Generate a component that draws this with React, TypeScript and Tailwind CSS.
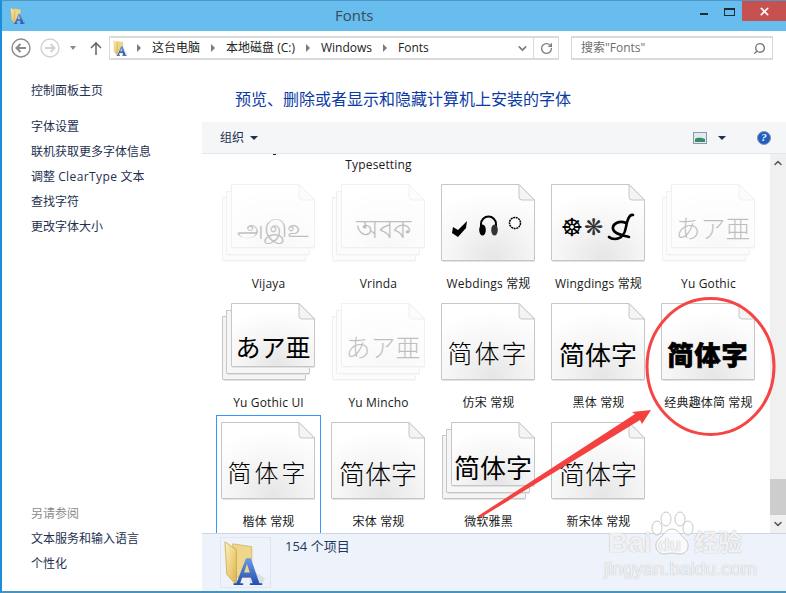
import { useId } from 'react';
import { ChevronDown, ChevronUp, Search, RotateCw, X } from 'lucide-react';

const UI_FONT = "font-['Open_Sans','Noto_Sans_CJK_SC',sans-serif]";

type Font = { label: string; stacked?: boolean; faded?: boolean; selected?: boolean; glyph: React.ReactNode };

function Han({ className }: { className: string }) {
  return <span className={`whitespace-nowrap font-['Noto_Sans_CJK_SC',sans-serif] text-black ${className}`}>简体字</span>;
}

function Kana({ className = '' }: { className?: string }) {
  return <span className={`whitespace-nowrap font-['Noto_Sans_CJK_JP',sans-serif] text-[25px] text-black ${className}`}>あア亜</span>;
}

function WebdingsGlyphs() {
  return (
    <svg width="80" height="30" viewBox="0 0 80 30" className="mt-[-12px]">
      <path d="M5 14l5 3 9-9-1 7-8 9-6-4z" fill="#000" />
      <path d="M33 14v-3a7.5 7.5 0 0 1 15 0v3" fill="none" stroke="#000" strokeWidth="2" />
      <ellipse cx="34.5" cy="17" rx="3.3" ry="5.5" fill="#000" />
      <ellipse cx="46.5" cy="17" rx="3.3" ry="5.5" fill="#333" />
      <circle cx="67" cy="10" r="5.5" fill="#fff" stroke="#000" strokeWidth="1.5" strokeDasharray="2 .6" />
    </svg>
  );
}

function WingdingsGlyphs() {
  return (
    <div className="mt-[-14px] flex items-center">
      <span className="font-['DejaVu_Sans',sans-serif] text-[25px] leading-none text-black">☸</span>
      <span className="ml-[1px] font-['DejaVu_Sans',sans-serif] text-[23px] leading-none text-[#333]">❋</span>
      <svg width="28" height="28" viewBox="0 0 28 28" className="ml-[4px]">
        <path
          d="M26 2C22 1 20 8 19 14C18 21 14 26 8 26C4 26 2 24 2 24M19 10C12 7 5 11 6 16C7 21 15 22 22 24"
          fill="none"
          stroke="#000"
          strokeWidth="2.6"
          strokeLinecap="round"
        />
      </svg>
    </div>
  );
}

const rows: Font[][] = [
  [
    { label: 'Vijaya', stacked: true, faded: true, glyph: <span className="font-['Noto_Sans','DejaVu_Sans',sans-serif] text-[24px] text-black">அஇஉ</span> },
    { label: 'Vrinda', stacked: true, faded: true, glyph: <span className="font-['Noto_Sans','DejaVu_Sans',sans-serif] text-[26px] text-black">অবক</span> },
    { label: 'Webdings 常规', glyph: <WebdingsGlyphs /> },
    { label: 'Wingdings 常规', glyph: <WingdingsGlyphs /> },
    { label: 'Yu Gothic', stacked: true, faded: true, glyph: <Kana className="font-light" /> },
  ],
  [
    { label: 'Yu Gothic UI', stacked: true, glyph: <Kana /> },
    { label: 'Yu Mincho', stacked: true, faded: true, glyph: <Kana className="font-light" /> },
    { label: '仿宋 常规', glyph: <Han className="text-[25px] font-light tracking-[2px]" /> },
    { label: '黑体 常规', glyph: <Han className="text-[26px] font-normal" /> },
    { label: '经典趣体简 常规', glyph: <Han className="text-[26px] font-black tracking-[1px] [-webkit-text-stroke:0.7px_black]" /> },
  ],
  [
    { label: '楷体 常规', selected: true, glyph: <Han className="text-[24px] font-light tracking-[3px]" /> },
    { label: '宋体 常规', glyph: <Han className="text-[26px] font-light" /> },
    { label: '微软雅黑', stacked: true, glyph: <Han className="text-[26px] font-normal" /> },
    { label: '新宋体 常规', glyph: <Han className="text-[26px] font-light" /> },
  ],
];

function Page({ x, y, w, h, fill }: { x: number; y: number; w: number; h: number; fill: string }) {
  const f = 16;
  return (
    <g transform={`translate(${x} ${y})`}>
      <path
        d={`M.5 .5H${w - f}L${w - 0.5} ${f}V${h - 1}Q${w - 0.5} ${h - 0.5} ${w - 1} ${h - 0.5}H1Q.5 ${h - 0.5} .5 ${h - 1}Z`}
        fill={fill}
        stroke="#c6c6c6"
      />
      <path d={`M${w - f} .5V${f - 3}Q${w - f} ${f} ${w - f + 3} ${f}H${w - 0.5}Z`} fill="#f4f4f4" stroke="#c6c6c6" />
      <path d={`M1.5 ${h + 0.5}H${w - 0.5}`} stroke="#e2e2e2" />
    </g>
  );
}

function FontTile({ font }: { font: Font }) {
  const id = useId();
  const fill = `url(#${id})`;
  return (
    <div className={`relative h-[78px] w-[94px] ${font.faded ? 'opacity-25' : ''}`}>
      <svg width="94" height="80" className="absolute left-0 top-[-1px]">
        <defs>
          <radialGradient id={id} cx="0.55" cy="0.95" r="0.85">
            <stop offset="0" stopColor="#e6e6e6" />
            <stop offset="0.55" stopColor="#f6f6f6" />
            <stop offset="1" stopColor="#ffffff" />
          </radialGradient>
        </defs>
        {font.stacked ? (
          <>
            <Page x={1} y={14} w={84} h={64} fill="#f4f4f4" />
            <Page x={5} y={8} w={84} h={64} fill="#f6f6f6" />
            <Page x={10} y={1} w={84} h={64} fill={fill} />
          </>
        ) : (
          <Page x={0} y={1} w={94} h={77} fill={fill} />
        )}
      </svg>
      <div
        className={`absolute flex items-center justify-center ${
          font.stacked ? 'left-[10px] right-0 top-[22px] h-[44px]' : 'left-0 right-0 top-[28px] h-[44px]'
        }`}
      >
        {font.glyph}
      </div>
    </div>
  );
}

function FontCell({ font }: { font: Font }) {
  return (
    <div className={`box-border h-[119px] w-[105px] border ${font.selected ? 'border-[#3399ff]' : 'border-transparent'}`}>
      <div className="ml-[4px] mt-[6px]">
        <FontTile font={font} />
      </div>
      <div className="mt-[14px] whitespace-nowrap text-center text-[12px] leading-[16px] tracking-[0.15px] text-[#1a1a1a]">{font.label}</div>
    </div>
  );
}

function FolderIcon({ size }: { size: number }) {
  return (
    <svg width={size} height={size} viewBox="0 0 48 48">
      <defs>
        <linearGradient id="flap" x1="0" x2="1" y1="0" y2="1">
          <stop offset="0" stopColor="#fff3b8" />
          <stop offset="1" stopColor="#dcb24e" />
        </linearGradient>
        <linearGradient id="letter" x1="0" x2="0" y1="0" y2="1">
          <stop offset="0" stopColor="#6d9ae6" />
          <stop offset="1" stopColor="#1f4fb0" />
        </linearGradient>
      </defs>
      <path d="M28 30l16 10-4 7H28z" fill="#000" fillOpacity=".08" />
      <path d="M10 4l20 3v32H14z" fill="#efd68a" stroke="#d3b15c" strokeWidth=".8" />
      <path d="M2 2l12 8v37L4 36z" fill="url(#flap)" stroke="#c9a24a" strokeWidth=".8" />
      <path
        d="M11 47v-2h3L24 19h5l9 26h3v2H28v-2h3l-2-6H20l-2 6h3v2zM22 34h6l-3-9z"
        fill="url(#letter)"
        fillRule="evenodd"
      />
    </svg>
  );
}

function NavCircle({ faded }: { faded?: boolean }) {
  const c = faded ? '#d2d2d2' : '#8a8a8a';
  return (
    <svg width="20" height="20" viewBox="0 0 20 20">
      <circle cx="10" cy="10" r="9" fill="none" stroke={c} strokeWidth="1.4" />
      {faded ? (
        <path d="M5 10h9M10.5 6l4 4-4 4" fill="none" stroke={c} strokeWidth="2" />
      ) : (
        <path d="M15 10H6M9.5 6l-4 4 4 4" fill="none" stroke={c} strokeWidth="2" />
      )}
    </svg>
  );
}

function Crumb({ text }: { text: string }) {
  return (
    <>
      <span className="mx-[11px] h-0 w-0 border-y-[4px] border-l-[4px] border-y-transparent border-l-[#7a7a7a]" />
      <span className="whitespace-nowrap">{text}</span>
    </>
  );
}

function SideLink({ children, muted }: { children: React.ReactNode; muted?: boolean }) {
  return <div className={`h-[25px] whitespace-nowrap text-[12px] leading-[25px] ${muted ? 'text-[#8a8a8a]' : 'text-[#1e2f50]'}`}>{children}</div>;
}

export default function App() {
  return (
    <div className={`relative flex h-[593px] w-[786px] flex-col overflow-hidden border-b-2 border-l-2 border-t border-b-[#4a93bd] border-l-[#1a8fd8] border-t-[#4d97c6] bg-white ${UI_FONT}`}>
      {/* title bar */}
      <div className="relative flex h-[30px] shrink-0 items-start bg-[#67bdee]">
        <div className="ml-[8px] mt-[6px]">
          <FolderIcon size={17} />
        </div>
        <div className="absolute left-[333px] top-[3px] text-[15px] leading-[22px] text-[#3c4a55]">Fonts</div>
        <div className="ml-auto flex items-start">
          <div className="mr-[16px] mt-[12px] h-[2px] w-[8px] bg-[#1c2b38]" />
          <div className="mr-[7px] mt-[7px] h-[8px] w-[11px] border border-t-2 border-[#1c2b38]" />
          <div className="flex h-[20px] w-[44px] items-center justify-center bg-[#c75050]">
            <X size={13} strokeWidth={3} color="#fff" />
          </div>
        </div>
      </div>

      {/* address row */}
      <div className="flex h-[39px] shrink-0 items-center pb-[5px] pl-[9px]">
        <NavCircle />
        <div className="ml-[9px]">
          <NavCircle faded />
        </div>
        <span className="ml-[10px] h-0 w-0 border-x-[3.5px] border-t-[4px] border-x-transparent border-t-[#8a8a8a]" />
        <svg width="14" height="14" viewBox="0 0 14 14" className="ml-[13px]">
          <path d="M7 14V2M2 7l5-5 5 5" fill="none" stroke="#6b6b6b" strokeWidth="1.6" />
        </svg>
        <div className="ml-[6px] flex h-[24px] w-[450px] items-center border-2 border-[#dadada] border-x-[1px] text-[12px] text-[#222]">
          <div className="ml-[3px]">
            <FolderIcon size={16} />
          </div>
          <div className="ml-[-3px] flex items-center">
            <Crumb text="这台电脑" />
            <Crumb text="本地磁盘 (C:)" />
            <Crumb text="Windows" />
            <Crumb text="Fonts" />
          </div>
          <ChevronDown size={13} strokeWidth={3} color="#7a7a7a" className="ml-auto mr-[4px]" />
          <div className="flex h-full w-[25px] items-center justify-center border-l border-[#dadada]">
            <RotateCw size={13} strokeWidth={2.4} color="#7d7d7d" />
          </div>
        </div>
        <div className="ml-[12px] flex h-[24px] w-[202px] items-center justify-between border-2 border-[#dadada] border-x-[1px] pl-[9px] pr-[6px] text-[12px] text-[#6d6d6d]">
          <span>搜索"Fonts"</span>
          <Search size={13} strokeWidth={2.6} color="#777" className="-scale-x-100" />
        </div>
      </div>

      <div className="flex min-h-0 flex-1">
        {/* left panel */}
        <aside className="flex w-[200px] shrink-0 flex-col justify-between pb-[15px] pl-[29px] pt-[8px]">
          <div>
            <div className="mb-[11px]">
              <SideLink>控制面板主页</SideLink>
            </div>
            <SideLink>字体设置</SideLink>
            <SideLink>联机获取更多字体信息</SideLink>
            <SideLink>
              调整 <span className="tracking-[0.4px]">ClearType</span> 文本
            </SideLink>
            <SideLink>查找字符</SideLink>
            <SideLink>更改字体大小</SideLink>
          </div>
          <div>
            <SideLink muted>另请参阅</SideLink>
            <SideLink>文本服务和输入语言</SideLink>
            <SideLink>个性化</SideLink>
          </div>
        </aside>

        {/* main pane */}
        <main className="flex min-w-0 flex-1 flex-col">
          <div className="h-[52px] shrink-0 pl-[33px] pt-[17px] text-[16px] leading-[24px] text-[#0b3aa5]">预览、删除或者显示和隐藏计算机上安装的字体</div>

          <div className="flex h-[32px] shrink-0 items-center border-b border-[#e6e7e9] bg-[#f5f6f7] pl-[18px] text-[12px] text-[#1e2f50]">
            <span>组织</span>
            <span className="ml-[6px] h-0 w-0 border-x-[4px] border-t-[4px] border-x-transparent border-t-[#1e2f50]" />
            <svg width="14" height="12" viewBox="0 0 14 12" className="ml-auto">
              <rect x=".5" y=".5" width="13" height="11" fill="#dfeaf2" stroke="#8b98a6" />
              <path d="M2 7c3-2 7-1 10 0v3H2z" fill="#3d8a6a" />
            </svg>
            <span className="ml-[11px] h-0 w-0 border-x-[4px] border-t-[4px] border-x-transparent border-t-[#1e2f50]" />
            <div className="ml-[31px] mr-[15px] flex h-[14px] w-[14px] items-center justify-center rounded-full border border-[#8a94a5] bg-[#1f5fc4] font-['Liberation_Serif',serif] text-[11px] font-bold italic text-white">?</div>
          </div>

          <div className="flex min-h-0 flex-1">
            <div className="relative min-w-0 flex-1 overflow-hidden pl-[14px]">
              <div className="absolute left-[71px] top-0 h-px w-[3px] bg-[#222]" />
              <div className="grid h-[23px] grid-cols-[repeat(5,105px)] gap-x-[5px]">
                <div className="col-start-2 text-center text-[12px] leading-[21px] tracking-[0.15px] text-[#1a1a1a]">Typesetting</div>
              </div>
              <div className="grid grid-cols-[repeat(5,105px)] gap-x-[5px]">
                {rows.flat().map((font) => (
                  <FontCell key={font.label} font={font} />
                ))}
              </div>
            </div>
            <div className="flex w-[16px] shrink-0 flex-col items-center bg-[#f0f0f0]">
              <ChevronUp size={12} strokeWidth={3} color="#555" className="mt-[3px]" />
              <div className="mt-auto h-[36px] w-full bg-[#cdcdcd]" />
              <ChevronDown size={12} strokeWidth={3} color="#555" className="my-[3px]" />
            </div>
          </div>

          <div className="flex h-[58px] shrink-0 items-start border-t border-[#c9d6e8] bg-[#eef2fb] pl-[18px]">
            <div className="mt-[3px] flex h-[51px] w-[51px] items-center justify-center border border-[#e2e5ec]">
              <FolderIcon size={46} />
            </div>
            <div className="ml-[14px] mt-[2px] text-[13px] leading-[20px] text-[#1e395b]">154 个项目</div>
          </div>
        </main>
      </div>

      {/* baidu watermark */}
      <div className="pointer-events-none absolute left-[598px] top-[494px] h-[86px] w-[150px] text-white/85 [text-shadow:0_0_1px_rgba(130,130,130,0.75)]">
        <svg width="50" height="48" viewBox="0 0 50 48" className="absolute left-[47px] top-[16px]">
          <g fill="#ffffff" fillOpacity=".6" stroke="#c8c8c8">
            <ellipse cx="10" cy="17" rx="5" ry="7" />
            <ellipse cx="19" cy="8" rx="5" ry="7" />
            <ellipse cx="33" cy="8" rx="5" ry="7" />
            <ellipse cx="41" cy="17" rx="5" ry="7" />
            <path d="M25 18c6 0 8 6 13 10 6 5 3 15-5 15-3 0-5-1-8-1s-5 1-8 1c-8 0-11-10-5-15 5-4 7-10 13-10z" />
          </g>
        </svg>
        <div className="absolute left-[8px] top-[36px] whitespace-nowrap font-['Liberation_Sans',sans-serif] text-[28px] font-bold leading-[24px]">Bai</div>
        <div className="absolute left-[58px] top-[39px] whitespace-nowrap font-['Liberation_Sans',sans-serif] text-[19px] font-bold leading-[22px]">du</div>
        <div className="absolute left-[94px] top-[34px] whitespace-nowrap font-['Noto_Sans_CJK_SC',sans-serif] text-[24px] font-bold leading-[24px]">经验</div>
        <div className="absolute left-[4px] top-[63px] whitespace-nowrap font-['Liberation_Sans',sans-serif] text-[19px] leading-[22px]">jingyan.baidu.com</div>
      </div>

      {/* red marks drawn over the screenshot */}
      <svg width="786" height="593" className="pointer-events-none absolute left-[-2px] top-[-1px]">
        <ellipse cx="710.5" cy="366.5" rx="63.5" ry="68" fill="none" stroke="#f54545" strokeWidth="3" />
        <path d="M478 516L635 414L632 412L651 410L642 424L640 420L480 518Z" fill="#f54040" />
      </svg>
    </div>
  );
}
